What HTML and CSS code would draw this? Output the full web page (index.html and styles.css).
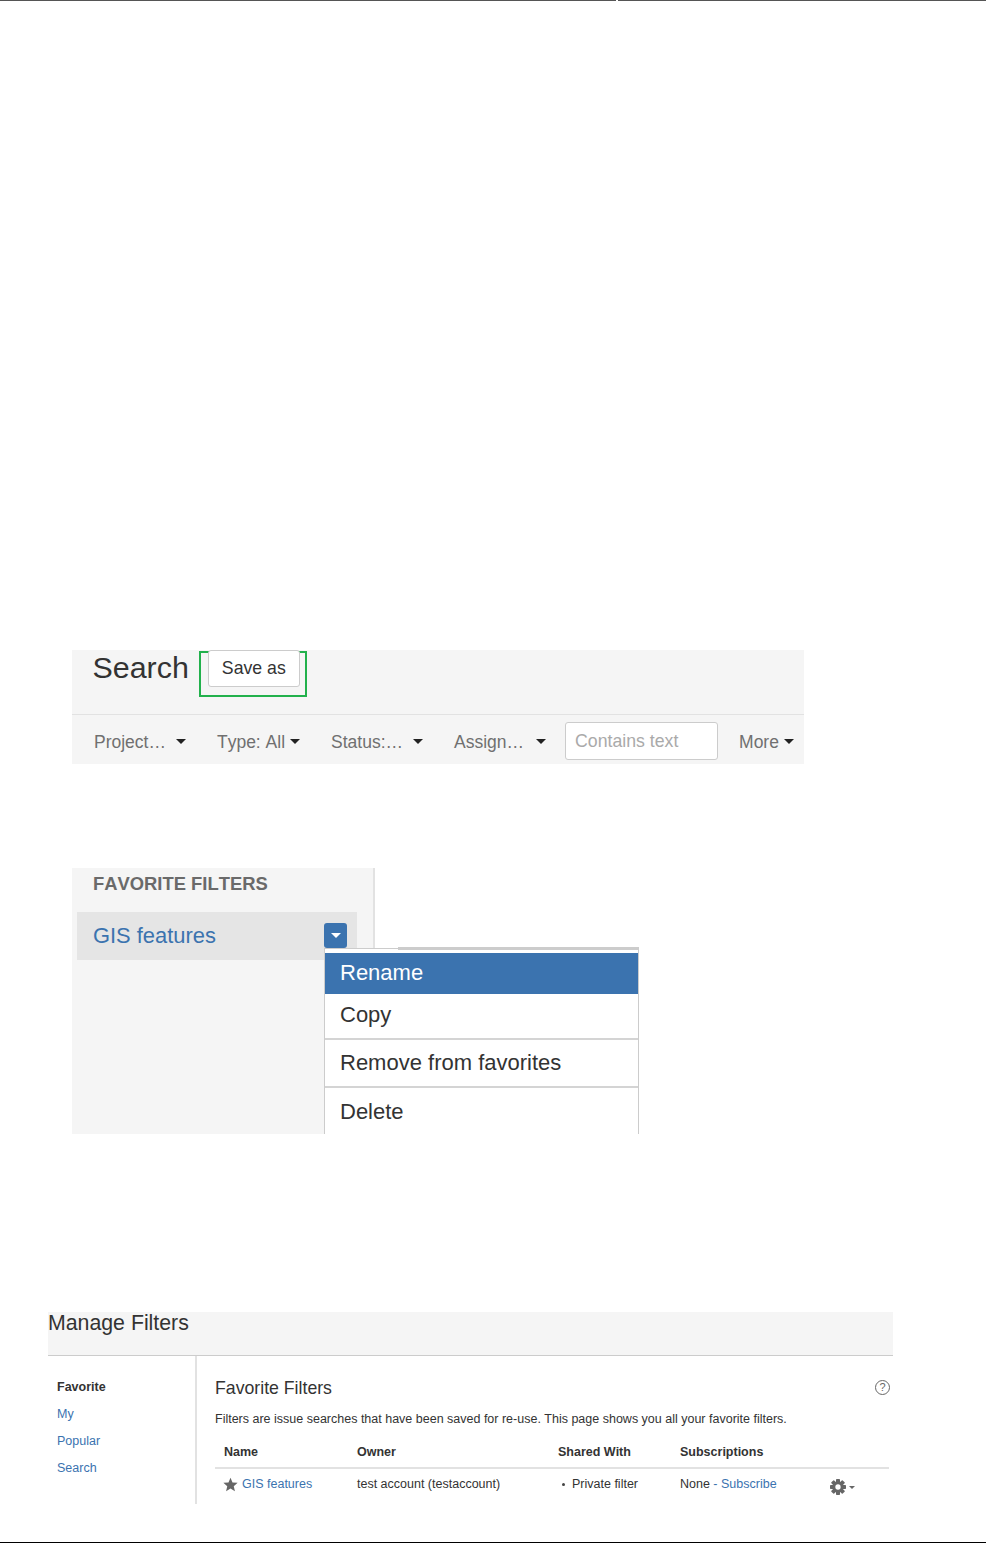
FILE: index.html
```html
<!DOCTYPE html>
<html lang="en">
<head>
<meta charset="utf-8">
<title>Filters</title>
<link rel="stylesheet" href="styles.css">
</head>
<body>
<div class="page">
  <div class="top-rule"><span class="top-left"></span><span class="top-right"></span></div>

  <section class="search">
    <div class="search-head">
      <h1 class="search-title">Search</h1>
      <div class="highlight"><button class="save-btn">Save as</button></div>
    </div>
    <div class="toolbar">
      <div class="filter"><span>Project…</span><i class="caret"></i></div>
      <div class="filter tight"><span>Type: All</span><i class="caret"></i></div>
      <div class="filter"><span>Status:…</span><i class="caret"></i></div>
      <div class="filter wide"><span>Assign…</span><i class="caret"></i></div>
      <div class="text-input">Contains text</div>
      <div class="filter tight more"><span>More</span><i class="caret"></i></div>
    </div>
  </section>

  <section class="favorites">
    <h2 class="fav-title">FAVORITE FILTERS</h2>
    <div class="fav-item">
      <a class="fav-link">GIS features</a>
      <span class="fav-btn"><i class="caret white"></i></span>
    </div>
    <div class="menu">
      <div class="menu-item active">Rename</div>
      <div class="menu-item copy">Copy</div>
      <div class="menu-item remove">Remove from favorites</div>
      <div class="menu-item delete">Delete</div>
    </div>
  </section>

  <section class="manage">
    <h2 class="manage-title">Manage Filters</h2>
    <div class="manage-body">
      <nav class="side">
        <div class="side-item current">Favorite</div>
        <a class="side-item">My</a>
        <a class="side-item">Popular</a>
        <a class="side-item">Search</a>
      </nav>
      <div class="main">
        <div class="main-head">
          <h3 class="main-title">Favorite Filters</h3>
          <span class="help">?</span>
        </div>
        <p class="desc">Filters are issue searches that have been saved for re-use. This page shows you all your favorite filters.</p>
        <div class="row head-row">
          <span>Name</span><span>Owner</span><span>Shared With</span><span>Subscriptions</span><span></span>
        </div>
        <div class="row data-row">
          <span class="name-cell">
            <svg class="star" viewBox="0 0 24 24" width="15" height="15"><path fill="#666" d="M12 1l3.200 7.600 8.200.7-6.200 5.400 1.900 8L12 18.500 4.900 22.700l1.900-8L.6 9.300l8.200-.7z"/></svg>
            <a>GIS features</a>
          </span>
          <span>test account (testaccount)</span>
          <span class="shared"><i class="bullet"></i>Private filter</span>
          <span>None <a>- Subscribe</a></span>
          <span class="actions">
            <svg class="gear" viewBox="0 0 24 24" width="16" height="16">
              <g fill="#666">
                <rect x="9" y="0" width="6" height="24" rx="1"/>
                <rect x="9" y="0" width="6" height="24" rx="1" transform="rotate(45 12 12)"/>
                <rect x="9" y="0" width="6" height="24" rx="1" transform="rotate(90 12 12)"/>
                <rect x="9" y="0" width="6" height="24" rx="1" transform="rotate(135 12 12)"/>
                <circle cx="12" cy="12" r="8.500"/>
              </g>
              <circle cx="12" cy="12" r="4" fill="#fff"/>
            </svg>
            <i class="caret small"></i>
          </span>
        </div>
      </div>
    </div>
  </section>

  <div class="bottom-rule"></div>
</div>
</body>
</html>
```
FILE: styles.css
```css
* { box-sizing: border-box; }
html, body { margin: 0; padding: 0; background: #fff; }
body { font-family: "Liberation Sans", Arial, sans-serif; color: #333; font-kerning: none; }
h1, h2, h3, p { margin: 0; font-weight: normal; }
a { color: #3b73af; }
i { display: block; }

.page { width: 986px; height: 1543px; display: flex; flex-direction: column; overflow: hidden; }

.top-rule { display: flex; gap: 2px; height: 1px; flex: none; }
.top-left { width: 616px; background: #555; }
.top-right { flex: 1; background: #555; }

.caret { width: 0; height: 0; border-left: 5px solid transparent; border-right: 5px solid transparent; border-top: 5px solid #222; }
.caret.white { border-top-color: #fff; }
.caret.small { border-left-width: 3.5px; border-right-width: 3.5px; border-top: 3.5px solid #666; }

/* Search */
.search { margin: 649px 0 0 72px; width: 732px; height: 114px; flex: none; background: #f5f5f5; display: flex; flex-direction: column; }
.search-head { height: 65px; flex: none; border-bottom: 1px solid #e2e2e2; display: flex; align-items: flex-start; padding-left: 20.500px; }
.search-title { font-size: 30.400px; line-height: 35px; margin-right: 10px; }
.highlight { margin-top: 1px; width: 108px; height: 46px; border: 2px solid #22b14c; padding-left: 7px; }
.save-btn { display: block; margin-top: -3px; width: 92px; height: 37px; padding: 0; background: #fff; border: 1px solid #ccc; border-radius: 3px; font: 17.700px/1 "Liberation Sans", Arial, sans-serif; font-kerning: none; color: #333; }

.toolbar { flex: 1; display: flex; align-items: center; padding: 0 0 0 22px; color: #707070; font-size: 17.500px; gap: 31px; }
.filter { display: flex; align-items: center; gap: 10px; line-height: 22px; padding-top: 5px; }
.filter .caret { margin-top: -1px; }
.filter.tight { gap: 5px; }
.filter.wide { gap: 12px; }
.text-input { width: 153px; height: 38px; margin: 2px -10px 0 -12px; padding: 0 9px; background: #fff; border: 1px solid #ccc; border-radius: 3px; color: #aaa; line-height: 36px; font-size: 17.700px; }

/* Favorites */
.favorites { position: relative; margin: 104px 0 0 72px; width: 303px; height: 266px; flex: none; background: #f5f5f5; border-right: 2px solid #e2e2e2; padding: 5px 0 0 5px; }
.fav-title { font-size: 18.400px; line-height: 22px; font-weight: bold; color: #6a6a6a; padding-left: 16px; }
.fav-item { margin-top: 17px; width: 280px; height: 48px; background: #e5e5e5; display: flex; align-items: center; justify-content: space-between; padding: 0 10px 0 16px; }
.fav-link { font-size: 21.900px; line-height: 48px; }
.fav-btn { width: 23px; height: 25px; margin-top: -1px; background: #3b73af; border-radius: 3px; display: flex; align-items: center; justify-content: center; }

.menu { position: absolute; left: 252px; top: 80px; width: 315px; height: 186px; background: #fff; border: 1px solid #ccc; border-bottom: 0; padding-top: 4px; font-size: 22px; color: #333; overflow: hidden; }
.favorites::after { content: ""; position: absolute; left: 326px; top: 79px; width: 241px; height: 3px; background: #ccc; }
.menu-item { padding-left: 15px; }
.menu-item.active { height: 41px; line-height: 40px; background: #3b73af; color: #fff; }
.menu-item.copy { height: 46px; line-height: 41px; border-bottom: 2px solid #d4d4d4; }
.menu-item.remove { height: 48px; line-height: 46px; border-bottom: 2px solid #d4d4d4; }
.menu-item.delete { line-height: 47px; }

/* Manage */
.manage { margin: 178px 0 0 48px; width: 845px; height: 192px; flex: none; display: flex; flex-direction: column; }
.manage-title { height: 44px; flex: none; background: #f5f5f5; border-bottom: 1px solid #ccc; font-size: 21.300px; line-height: 23px; }
.manage-body { flex: 1; display: flex; font-size: 12.500px; }
.side { width: 149px; flex: none; border-right: 2px solid #e2e2e2; padding: 18px 0 0 9px; display: flex; flex-direction: column; }
.side-item { height: 27px; line-height: 27px; }
.side-item.current { font-weight: bold; color: #333; }
.main { flex: 1; padding: 0 4px 0 18px; }
.main-head { display: flex; justify-content: space-between; align-items: center; height: 32px; margin-top: 16px; }
.main-title { font-size: 17.700px; line-height: 31px; }
.help { width: 15px; height: 15px; margin: -2px -1px 0 0; border: 1.500px solid #666; border-radius: 50%; color: #666; font-size: 11px; line-height: 12px; text-align: center; }
.desc { line-height: 18px; margin-top: 6px; }
.row { display: grid; grid-template-columns: 133px 201px 122px 150px 1fr; padding-left: 9px; }
.head-row { margin-top: 9px; height: 32px; line-height: 30px; font-weight: bold; border-bottom: 2px solid #e2e2e2; }
.data-row { height: 30px; line-height: 30px; }
.name-cell { display: flex; align-items: center; gap: 4px; height: 30px; margin-left: -1px; }
.star { flex: none; }
.shared { display: flex; align-items: center; height: 30px; padding-left: 4px; }
.bullet { width: 3px; height: 3px; border-radius: 50%; background: #444; margin-right: 7px; }
.actions { display: flex; align-items: center; gap: 3px; height: 36px; }

.bottom-rule { margin-top: 38px; height: 1px; flex: none; background: #000; }
```
